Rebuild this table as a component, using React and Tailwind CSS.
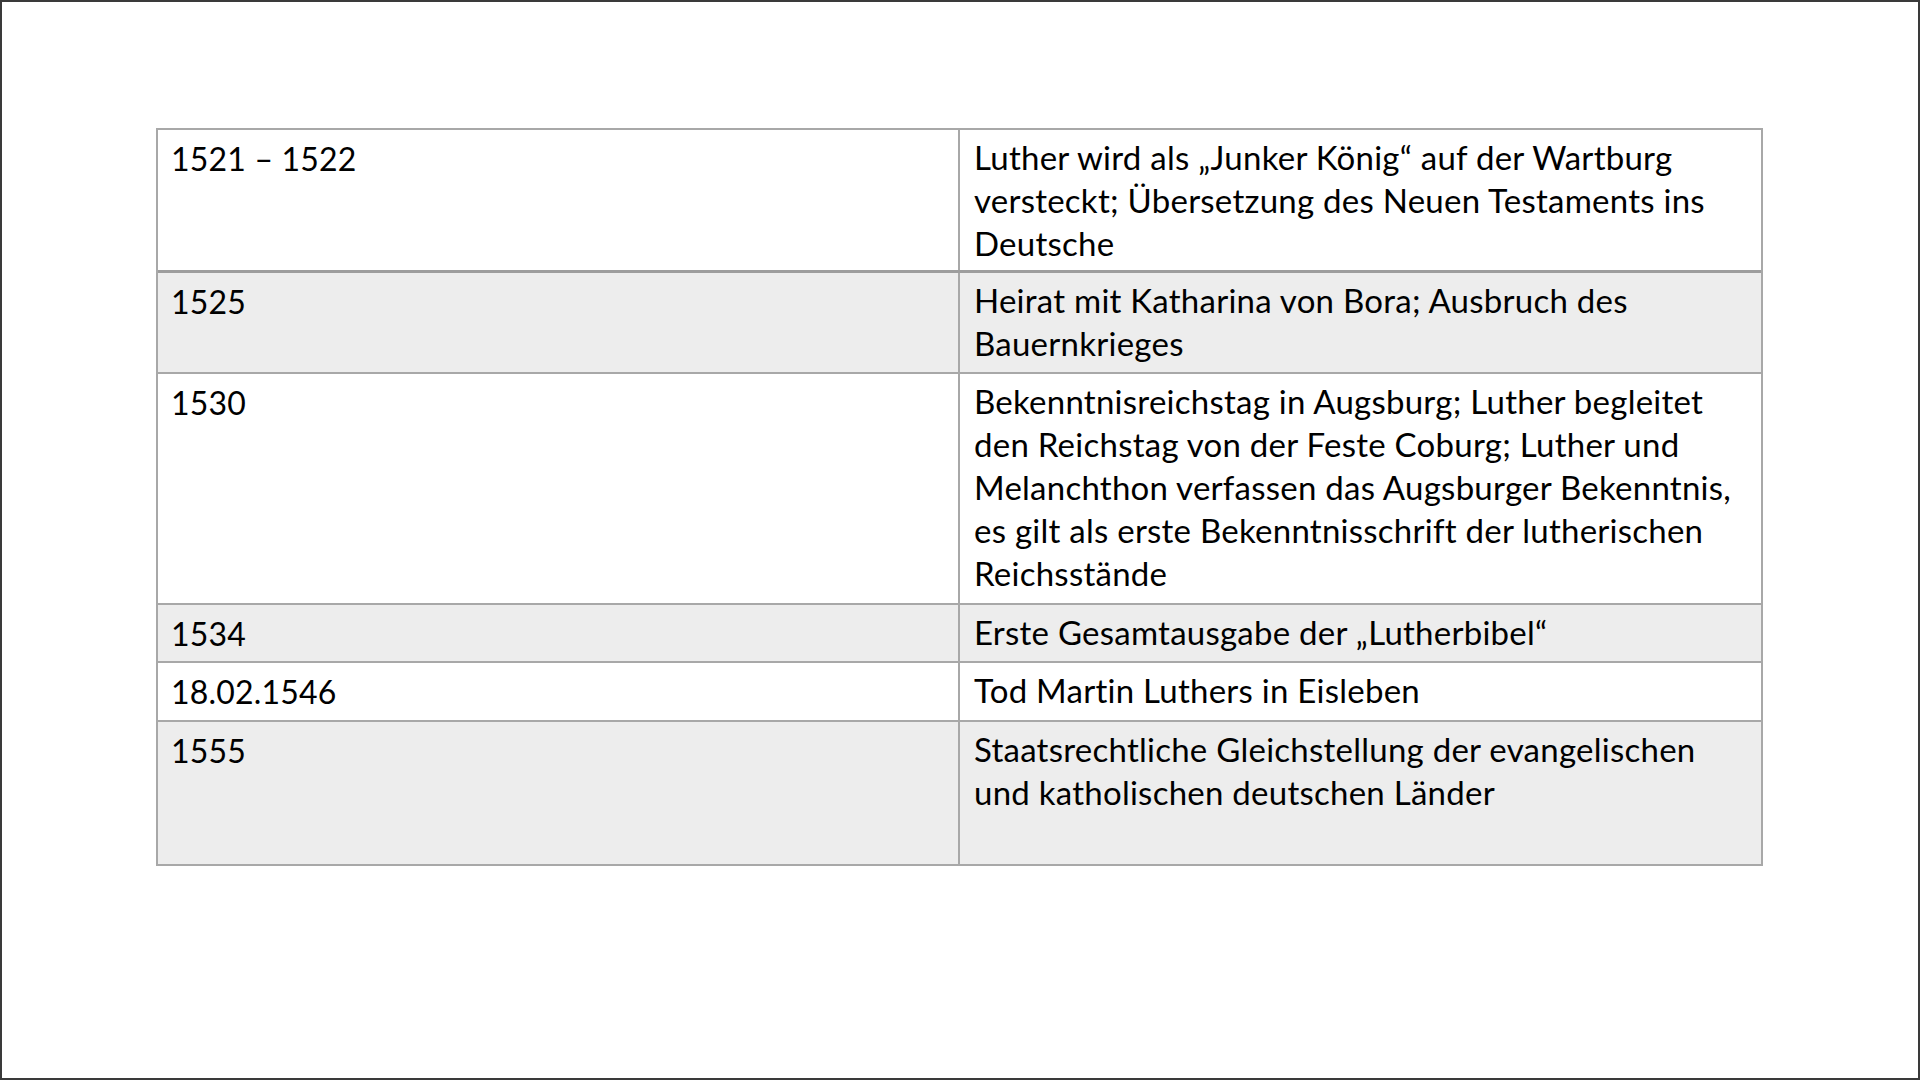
import React from "react";

const rows = [
  { date: "1521 – 1522", lines: ["Luther wird als „Junker König“ auf der Wartburg", "versteckt; Übersetzung des Neuen Testaments ins", "Deutsche"], h: "h-[143px]", bg: "bg-white", border: "border-b-[3px] border-[#9d9d9d]" },
  { date: "1525", lines: ["Heirat mit Katharina von Bora; Ausbruch des", "Bauernkrieges"], h: "h-[101px]", bg: "bg-[#ededed]", border: "border-b-2 border-[#a8a8a8]" },
  { date: "1530", lines: ["Bekenntnisreichstag in Augsburg; Luther begleitet", "den Reichstag von der Feste Coburg; Luther und", "Melanchthon verfassen das Augsburger Bekenntnis,", "es gilt als erste Bekenntnisschrift der lutherischen", "Reichsstände"], h: "h-[231px]", bg: "bg-white", border: "border-b-2 border-[#a8a8a8]" },
  { date: "1534", lines: ["Erste Gesamtausgabe der „Lutherbibel“"], h: "h-[58px]", bg: "bg-[#ededed]", border: "border-b-2 border-[#a8a8a8]" },
  { date: "18.02.1546", lines: ["Tod Martin Luthers in Eisleben"], h: "h-[59px]", bg: "bg-white", border: "border-b-2 border-[#a8a8a8]" },
  { date: "1555", lines: ["Staatsrechtliche Gleichstellung der evangelischen", "und katholischen deutschen Länder"], h: "h-[142px]", bg: "bg-[#ededed]", border: "" },
];

export default function App() {
  return (
    <div className="w-[1920px] h-[1080px] bg-white border-2 border-[#3a3a3a] box-border overflow-hidden font-['Lato',sans-serif] text-black">
      <div className="pt-[126px] pl-[154px]">
        <div className="w-[1607px] border-2 border-[#a8a8a8] flex flex-col">
          {rows.map((r, i) => (
            <div key={i} className={`flex ${r.h} ${r.bg} ${r.border} box-border`}>
              <div className="w-[802px] shrink-0 border-r-2 border-[#a8a8a8] pl-[13px] pt-[7px] text-[32px] leading-[43px] tracking-[0.2px]">
                {r.date}
              </div>
              <div className="flex-1 pl-[14px] pt-[6px] text-[33px] leading-[43px] tracking-[0.25px]">
                {r.lines.map((l, j) => (
                  <div key={j} className="whitespace-nowrap">{l}</div>
                ))}
              </div>
            </div>
          ))}
        </div>
      </div>
    </div>
  );
}
